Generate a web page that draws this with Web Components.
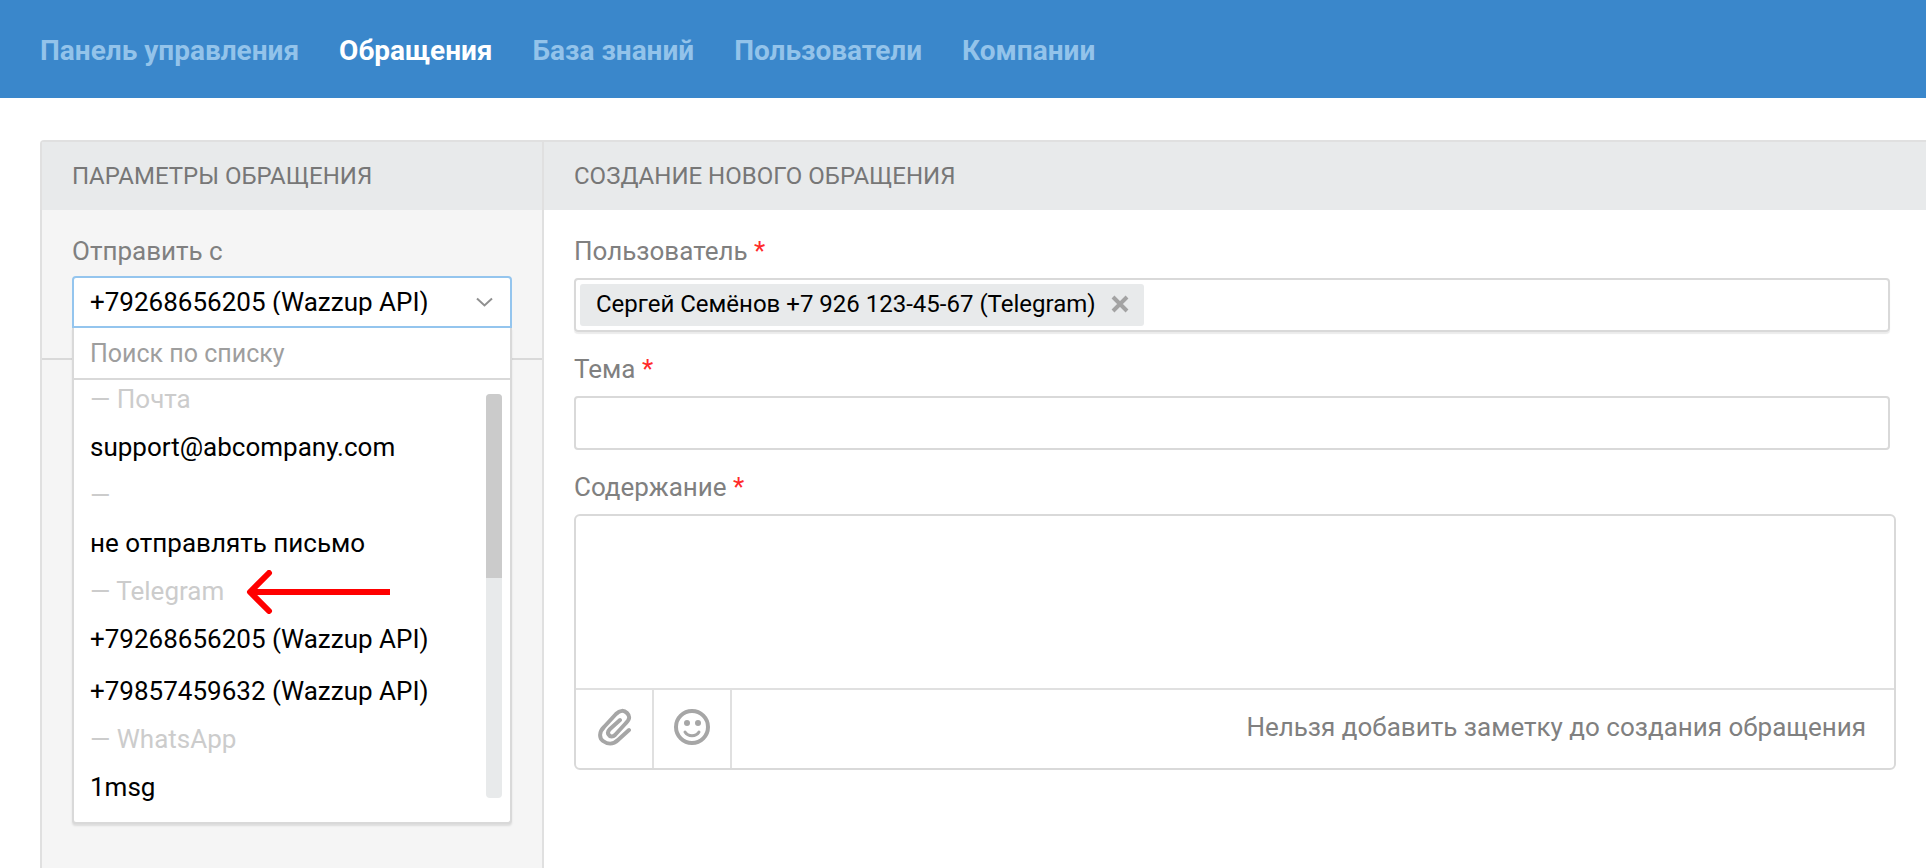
<!DOCTYPE html>
<html lang="ru">
<head>
<meta charset="utf-8">
<meta name="viewport" content="width=device-width, initial-scale=1">
<title>Создание нового обращения</title>
<style>
  :root {
    --blue: #3a87cb;
    --line: #d9d9d9;
    --frame: #e0e0e0;
    --muted: #808080;
    --fill: #e8eaeb;
  }
  body {
    margin: 0;
    min-height: 100vh;
    display: flex;
    flex-direction: column;
    background: #fff;
    color: #000;
    font: 26px/26px Roboto, "Open Sans", sans-serif;
  }
</style>
</head>
<body>
<app-header>
  <nav-link>Панель управления</nav-link>
  <nav-link active>Обращения</nav-link>
  <nav-link>База знаний</nav-link>
  <nav-link>Пользователи</nav-link>
  <nav-link>Компании</nav-link>
</app-header>

<ticket-layout>
  <ticket-panel slot="params" heading="Параметры обращения">
    <channel-select label="Отправить с"></channel-select>
  </ticket-panel>
  <ticket-panel slot="form" heading="Создание нового обращения">
    <user-field label="Пользователь" value="Сергей Семёнов +7 926 123-45-67 (Telegram)"></user-field>
    <text-field label="Тема"></text-field>
    <note-editor label="Содержание" hint="Нельзя добавить заметку до создания обращения"></note-editor>
  </ticket-panel>
</ticket-layout>

<script>
const base = `
  *, *::before, *::after { box-sizing: border-box; }
  input, select, textarea, button {
    margin: 0;
    padding: 0;
    border: 0;
    background: none;
    color: inherit;
    font: inherit;
    outline: none;
  }
`;

const fieldStyles = `
  ${base}
  :host { display: block; }
  :host(:not(:first-child)) { margin-top: 24px; }
  label { display: block; margin-bottom: 14px; color: var(--muted); }
  .required { color: #ff2a2a; }
`;

class BaseElement extends HTMLElement {
  constructor() {
    super();
    this.attachShadow({ mode: "open" });
  }

  connectedCallback() {
    this.shadowRoot.innerHTML = this.render();
  }
}

class AppHeader extends BaseElement {
  render() {
    return `
      <style>
        :host { display: block; background: var(--blue); }
        nav { display: flex; flex-wrap: wrap; gap: 40px; padding: 34px 40px 30px; line-height: 34px; }
      </style>
      <nav><slot></slot></nav>
    `;
  }
}

class NavLink extends BaseElement {
  render() {
    return `
      <style>
        :host { display: block; font-size: 28px; font-weight: 700; }
        a { color: #93c3ea; text-decoration: none; }
        :host([active]) a { color: #fff; }
      </style>
      <a href="#"><slot></slot></a>
    `;
  }
}

class TicketLayout extends BaseElement {
  render() {
    return `
      <style>
        ${base}
        :host {
          display: grid;
          grid-template-columns: 502px minmax(0, 1fr);
          flex: 1;
          margin: 42px 0 0 40px;
          border: 2px solid var(--frame);
          border-width: 2px 0 0 2px;
          border-radius: 4px 0 0 0;
        }
        .params { display: grid; background: #f5f5f5; border-right: 2px solid var(--frame); }
      </style>
      <div class="params"><slot name="params"></slot></div>
      <slot name="form"></slot>
    `;
  }
}

class TicketPanel extends BaseElement {
  render() {
    return `
      <style>
        ${base}
        :host { display: block; }
        h2 {
          margin: 0;
          padding: 20px 30px;
          background: var(--fill);
          color: #777;
          font-size: 24px;
          line-height: 28px;
          font-weight: 400;
          text-transform: uppercase;
        }
        .body { padding: 28px 30px 30px; }
        :host([slot="params"]) .body { border-bottom: 2px solid var(--line); }
      </style>
      <h2>${this.getAttribute("heading")}</h2>
      <div class="body"><slot></slot></div>
    `;
  }
}

class ChannelSelect extends BaseElement {
  groups = [
    ["Почта", ["support@abcompany.com"]],
    ["", ["не отправлять письмо"]],
    ["Telegram", ["+79268656205 (Wazzup API)", "+79857459632 (Wazzup API)"]],
    ["WhatsApp", ["1msg"]],
  ];

  render() {
    return `
      <style>
        ${fieldStyles}
        label { margin-bottom: 12px; }
        .control { position: relative; }
        select {
          appearance: none;
          display: block;
          width: 100%;
          height: 52px;
          padding: 0 60px 0 16px;
          border: 2px solid #94c5ee;
          border-radius: 4px 4px 0 0;
          background: #fff;
        }
        .chevron { position: absolute; right: 18px; top: 20px; pointer-events: none; }
        .menu {
          position: absolute;
          z-index: 1;
          top: 100%;
          left: 0;
          right: 0;
          border: 2px solid var(--line);
          border-top: 0;
          border-radius: 0 0 4px 4px;
          background: #fff;
          box-shadow: 0 2px 2px rgba(0, 0, 0, .1);
        }
        .search {
          display: block;
          position: relative;
          width: 100%;
          height: 50px;
          padding: 0 16px;
          font-size: 25px;
          box-shadow: 0 2px var(--line);
        }
        .search::placeholder { color: #9e9e9e; opacity: 1; }
        .scroll { display: flex; padding-bottom: 8px; }
        ul { flex: 1; margin: 0; padding: 0; list-style: none; }
        .group { position: relative; padding: 8px 16px 10px; color: #ccc; }
        .option { padding: 12px 16px 14px; }
        .track { width: 16px; margin: 16px 8px; border-radius: 4px; background: var(--fill); }
        .thumb { height: 184px; border-radius: 4px 4px 0 0; background: #cbcbcb; }
        .pointer { position: absolute; left: 172px; top: 0; }
      </style>
      <label for="channel">${this.getAttribute("label")}</label>
      <div class="control">
        <select id="channel"><option>+79268656205 (Wazzup API)</option></select>
        <svg class="chevron" width="18" height="12" viewBox="0 0 18 12" fill="none" stroke="#909090" stroke-width="2">
          <path d="M1 2.500 8.500 9.500l7.500-7"/>
        </svg>
        <div class="menu">
          <input class="search" type="text" placeholder="Поиск по списку" aria-label="Поиск по списку">
          <div class="scroll">
            <ul role="listbox">${this.groups.map((group) => this.renderGroup(group)).join("")}</ul>
            <div class="track"><div class="thumb"></div></div>
          </div>
        </div>
      </div>
    `;
  }

  renderGroup([name, options]) {
    const pointer = name === "Telegram"
      ? `<svg class="pointer" width="146" height="44" viewBox="0 0 146 44" fill="none" stroke="#f00" stroke-width="6">
           <path d="M144 22H6"/>
           <path d="M23 3 4 22l19 19" stroke-linecap="round" stroke-linejoin="round"/>
         </svg>`
      : "";
    return `
      <li class="group" role="presentation">— ${name}${pointer}</li>
      ${options.map((option) => `<li class="option" role="option">${option}</li>`).join("")}
    `;
  }
}

class UserField extends BaseElement {
  render() {
    return `
      <style>
        ${fieldStyles}
        .box {
          display: flex;
          height: 54px;
          margin-right: 6px;
          padding: 4px;
          border: 2px solid var(--line);
          border-radius: 4px;
          box-shadow: 0 2px 1px rgba(0, 0, 0, .08);
        }
        .tag {
          display: flex;
          align-items: center;
          gap: 14px;
          padding: 0 14px 2px 16px;
          border-radius: 3px;
          background: var(--fill);
          font-size: 24px;
          white-space: nowrap;
        }
        button { display: flex; }
        input { flex: 1; min-width: 0; padding-left: 8px; }
      </style>
      <label for="user">${this.getAttribute("label")} <span class="required">*</span></label>
      <div class="box">
        <span class="tag">
          ${this.getAttribute("value")}
          <button type="button" aria-label="Удалить">
            <svg width="20" height="20" viewBox="0 0 20 20" stroke="#a3a3a3" stroke-width="4">
              <path d="m3 3 14 14M17 3 3 17"/>
            </svg>
          </button>
        </span>
        <input id="user" type="text">
      </div>
    `;
  }
}

class TextField extends BaseElement {
  render() {
    return `
      <style>
        ${fieldStyles}
        .box { display: flex; margin-right: 6px; border: 2px solid var(--line); border-radius: 4px; }
        input { flex: 1; min-width: 0; height: 50px; padding: 0 16px; }
      </style>
      <label for="text">${this.getAttribute("label")} <span class="required">*</span></label>
      <div class="box"><input id="text" type="text"></div>
    `;
  }
}

class NoteEditor extends BaseElement {
  render() {
    return `
      <style>
        ${fieldStyles}
        .editor { border: 2px solid var(--line); border-radius: 6px; }
        textarea { display: block; width: 100%; height: 172px; padding: 12px 16px; resize: none; }
        .toolbar { display: flex; align-items: stretch; height: 80px; border-top: 2px solid var(--frame); }
        button {
          display: flex;
          align-items: center;
          justify-content: center;
          width: 78px;
          padding-bottom: 4px;
          border-right: 2px solid var(--frame);
        }
        .hint { margin: auto 28px auto auto; padding-bottom: 4px; color: var(--muted); }
      </style>
      <label for="note">${this.getAttribute("label")} <span class="required">*</span></label>
      <div class="editor">
        <textarea id="note"></textarea>
        <div class="toolbar">
          <button type="button" aria-label="Прикрепить файл">
            <svg width="36" height="38" viewBox="0 0 36 38" fill="none" stroke="#a6a6a6" stroke-width="4" stroke-linecap="round" stroke-linejoin="round">
              <path d="M33 22 22 32c-5 5-11 4-15 1s-4-9 1-14L20 6c4-4 8-4 11-1s3 6-1 10L19 27c-2 2-5 2-6 0-2-2-1-4 1-6L24 12"/>
            </svg>
          </button>
          <button type="button" aria-label="Добавить эмодзи">
            <svg width="38" height="38" viewBox="0 0 38 38" fill="none" stroke="#a6a6a6" stroke-width="4">
              <circle cx="19" cy="19" r="16"/>
              <circle cx="14" cy="15" r="3" fill="#a6a6a6" stroke="none"/>
              <circle cx="25" cy="15" r="3" fill="#a6a6a6" stroke="none"/>
              <path d="M12 24c3 5 11 5 14 0" stroke-width="3" stroke-linecap="round"/>
            </svg>
          </button>
          <span class="hint">${this.getAttribute("hint")}</span>
        </div>
      </div>
    `;
  }
}

customElements.define("app-header", AppHeader);
customElements.define("nav-link", NavLink);
customElements.define("ticket-layout", TicketLayout);
customElements.define("ticket-panel", TicketPanel);
customElements.define("channel-select", ChannelSelect);
customElements.define("user-field", UserField);
customElements.define("text-field", TextField);
customElements.define("note-editor", NoteEditor);
</script>
</body>
</html>
